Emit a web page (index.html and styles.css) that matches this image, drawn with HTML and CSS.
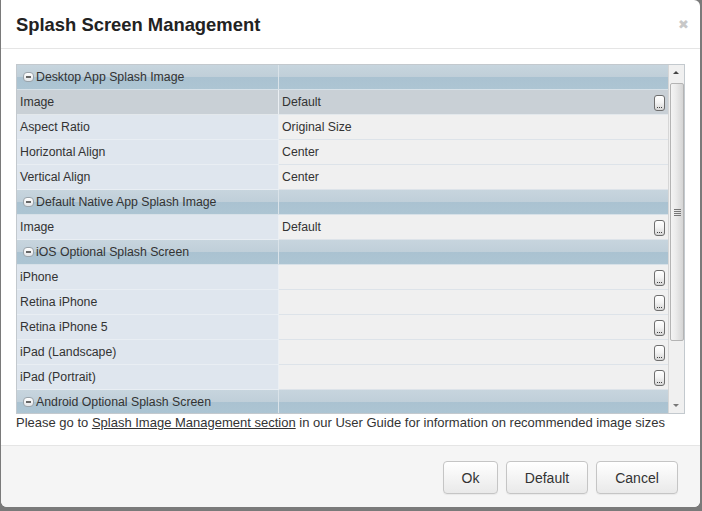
FILE: index.html
```html
<!DOCTYPE html>
<html>
<head>
<meta charset="utf-8">
<link rel="stylesheet" href="styles.css">
</head>
<body>
<div class="modal">
  <div class="modal-header">
    <h1 class="title">Splash Screen Management</h1>
    <span class="close">&#x2716;</span>
  </div>
  <div class="modal-body">
    <div class="grid">
      <div class="rows">
        <div class="row group"><div class="c1"><span class="minus"></span>Desktop App Splash Image</div><div class="c2"></div></div>
        <div class="row selected"><div class="c1">Image</div><div class="c2">Default<span class="dots"></span></div></div>
        <div class="row"><div class="c1">Aspect Ratio</div><div class="c2">Original Size</div></div>
        <div class="row"><div class="c1">Horizontal Align</div><div class="c2">Center</div></div>
        <div class="row"><div class="c1">Vertical Align</div><div class="c2">Center</div></div>
        <div class="row group"><div class="c1"><span class="minus"></span>Default Native App Splash Image</div><div class="c2"></div></div>
        <div class="row"><div class="c1">Image</div><div class="c2">Default<span class="dots"></span></div></div>
        <div class="row group"><div class="c1"><span class="minus"></span>iOS Optional Splash Screen</div><div class="c2"></div></div>
        <div class="row"><div class="c1">iPhone</div><div class="c2"><span class="dots"></span></div></div>
        <div class="row"><div class="c1">Retina iPhone</div><div class="c2"><span class="dots"></span></div></div>
        <div class="row"><div class="c1">Retina iPhone 5</div><div class="c2"><span class="dots"></span></div></div>
        <div class="row"><div class="c1">iPad (Landscape)</div><div class="c2"><span class="dots"></span></div></div>
        <div class="row"><div class="c1">iPad (Portrait)</div><div class="c2"><span class="dots"></span></div></div>
        <div class="row group"><div class="c1"><span class="minus"></span>Android Optional Splash Screen</div><div class="c2"></div></div>
      </div>
      <div class="scrollbar">
        <span class="arrow up"></span>
        <div class="thumb"><span class="grip"></span></div>
        <span class="arrow down"></span>
      </div>
    </div>
    <p class="note">Please go to <a class="link">Splash Image Management section</a> in our User Guide for information on recommended image sizes</p>
  </div>
  <div class="modal-footer">
    <button class="btn btn-ok">Ok</button>
    <button class="btn btn-wide">Default</button>
    <button class="btn btn-wide">Cancel</button>
  </div>
</div>
</body>
</html>
```
FILE: styles.css
```css
html, body { margin: 0; padding: 0; }
body {
  background: #7a7a7a;
  width: 702px;
  height: 511px;
  overflow: hidden;
  font-family: "Liberation Sans", Arial, sans-serif;
  color: #333;
}
.modal {
  margin-left: 1px;
  width: 699px;
  height: 507px;
  background: #fff;
  border-radius: 0 6px 6px 6px;
  overflow: hidden;
  display: flex;
  flex-direction: column;
}
.modal-header {
  height: 48px;
  border-bottom: 1px solid #e5e5e5;
  display: flex;
  align-items: center;
  justify-content: space-between;
  padding: 0 11px 0 15px;
}
.title {
  margin: 2px 0 0 0;
  font-size: 18.4px;
  font-weight: bold;
  color: #222;
  line-height: 22px;
}
.close {
  color: #c8c8c8;
  font-size: 13px;
  font-family: "DejaVu Sans", sans-serif;
  margin-top: 0;
}
.modal-body {
  flex: 1;
  padding: 15px 15px 0 15px;
}
.grid {
  height: 348px;
  border: 1px solid #c3c9ce;
  display: flex;
  overflow: hidden;
  background: #f0f0f0;
}
.rows { flex: 1; }
.row {
  display: grid;
  grid-template-columns: 262px 1fr;
  height: 25px;
  font-size: 12.3px;
}
.c1, .c2 {
  line-height: 24px;
  padding-left: 3px;
  box-sizing: border-box;
  height: 25px;
  white-space: nowrap;
}
.c1 {
  background: #dfe6ee;
  border-bottom: 1px solid #e9eef3;
  border-right: 1px solid #ebeff3;
}
.c2 {
  background: #f0f0f0;
  border-bottom: 1px solid #dde3e9;
  position: relative;
}
.selected .c1, .selected .c2 {
  background: #c9d0d6;
  border-bottom-color: #e3e8ec;
}
.group .c1, .group .c2 {
  background: linear-gradient(#c7d5de 0, #c0cfd9 48%, #aac2d1 50%, #adc5d3 100%);
  border-bottom: 1px solid #d7e1e8;
  line-height: 25px;
}
.group .c1 { border-right-color: #dae3e9; padding-left: 6px; }
.minus {
  display: inline-block;
  width: 9px;
  height: 8px;
  border: 1px solid #9aa3aa;
  border-radius: 4px;
  background: linear-gradient(#ffffff, #e3e6e9);
  vertical-align: -1px;
  margin-right: 2px;
  position: relative;
}
.minus::after {
  content: "";
  position: absolute;
  left: 2px;
  right: 2px;
  top: 3px;
  height: 2px;
  background: #666;
}
.dots {
  position: absolute;
  right: 3px;
  top: 5px;
  width: 9px;
  height: 14px;
  border: 1px solid #6e6e6e;
  border-radius: 3px;
  background: linear-gradient(#ffffff 0, #f4f4f4 45%, #d6d6d6 100%);
}
.dots::after {
  content: "";
  position: absolute;
  left: 2px;
  bottom: 2px;
  width: 1px;
  height: 1px;
  background: #444;
  box-shadow: 2px 0 0 #444, 4px 0 0 #444;
}
.scrollbar {
  width: 15px;
  border-left: 1px solid #d6d6d6;
  background: #f0f0f0;
  position: relative;
}
.arrow {
  position: absolute;
  left: 4px;
  width: 0;
  height: 0;
  border-left: 3px solid transparent;
  border-right: 3px solid transparent;
}
.arrow.up { top: 6px; border-bottom: 3px solid #444; }
.arrow.down { bottom: 6px; border-top: 3px solid #777; }
.thumb {
  position: absolute;
  top: 18px;
  left: 1px;
  width: 12px;
  height: 256px;
  border: 1px solid #b4b4b4;
  border-radius: 2px;
  background: linear-gradient(90deg, #f4f4f4 0, #ebebeb 40%, #d5d5d5 100%);
}
.grip {
  position: absolute;
  left: 3px;
  top: 125px;
  width: 7px;
  height: 1px;
  background: #777;
  box-shadow: 0 2px 0 #777, 0 4px 0 #777, 0 6px 0 #777;
}
.note {
  margin: 1px 0 0 0;
  font-size: 13px;
  line-height: 16px;
  color: #333;
  white-space: nowrap;
}
.link { text-decoration: underline; color: #333; }
.modal-footer {
  height: 62px;
  border-top: 1px solid #e5e5e5;
  background: #f5f5f5;
  display: flex;
  justify-content: flex-end;
  align-items: center;
  gap: 8px;
  padding: 2px 22px 0 22px;
  box-sizing: border-box;
}
.btn {
  height: 33px;
  border: 1px solid #c5c5c5;
  border-radius: 4px;
  background: linear-gradient(#ffffff, #e9e9e9);
  font-family: "Liberation Sans", Arial, sans-serif;
  font-size: 14px;
  color: #333;
  padding: 0;
  box-shadow: inset 0 1px 0 rgba(255,255,255,0.6), 0 1px 1px rgba(0,0,0,0.05);
}
.btn-ok { width: 55px; }
.btn-wide { width: 82px; }
```
